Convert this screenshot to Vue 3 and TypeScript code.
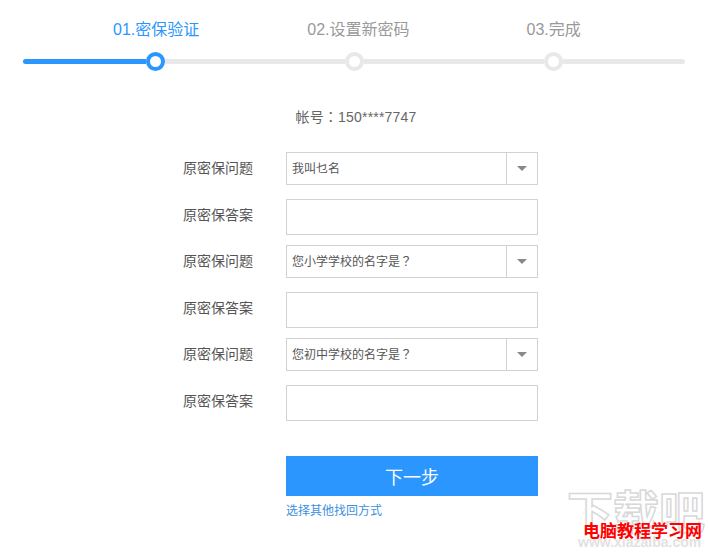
<script setup lang="ts">
interface Row {
  label: string
  value?: string
  mark?: string
}

const steps = [
  { text: '01.密保验证', active: true },
  { text: '02.设置新密码', active: false },
  { text: '03.完成', active: false },
]

const rows: Row[] = [
  { label: '原密保问题', value: '我叫乜名' },
  { label: '原密保答案' },
  { label: '原密保问题', value: '您小学学校的名字是', mark: '？' },
  { label: '原密保答案' },
  { label: '原密保问题', value: '您初中学校的名字是', mark: '？' },
  { label: '原密保答案' },
]
</script>

<template>
  <div class="page">
    <div class="labels">
      <span v-for="s in steps" :key="s.text" class="step-label" :class="{ active: s.active }">{{ s.text }}</span>
    </div>
    <div class="track">
      <i class="seg first on"></i>
      <i class="dot on"></i>
      <i class="seg"></i>
      <i class="dot"></i>
      <i class="seg"></i>
      <i class="dot"></i>
      <i class="seg last"></i>
    </div>

    <p class="account">帐号<span class="punct">：</span>150****7747</p>

    <form class="form" @submit.prevent>
      <div v-for="(row, i) in rows" :key="i" class="row" :class="row.value ? 'q' : 'a'">
        <label>{{ row.label }}</label>
        <div v-if="row.value" class="select">
          <span class="value">{{ row.value }}<span v-if="row.mark" class="punct">{{ row.mark }}</span></span>
          <span class="arrow"><i></i></span>
        </div>
        <input v-else type="text" />
      </div>
      <button type="submit">下一步</button>
      <a class="other" href="#">选择其他找回方式</a>
    </form>

    <div class="mark">
      <span class="mark-logo">下载吧</span>
      <span class="mark-url">www.xiazaiba.com</span>
      <span class="mark-red">电脑教程学习网</span>
    </div>
  </div>
</template>

<style>
html,
body {
  background: #fff;
}
</style>

<style scoped>
.page {
  position: relative;
  width: 709px;
  height: 553px;
  overflow: hidden;
  font-family: 'Liberation Sans', 'Noto Sans CJK SC', sans-serif;
  color: #555;
}
.punct {
  font-family: 'Noto Sans CJK TC', sans-serif;
}
.labels {
  display: flex;
  padding: 20px 0 0 113px;
  height: 41px;
  box-sizing: border-box;
}
.step-label {
  font-size: 16px;
  line-height: 20px;
  color: #999;
  white-space: nowrap;
}
.step-label + .step-label {
  margin-left: 108px;
}
.step-label:last-child {
  margin-left: 117px;
}
.step-label:first-child {
  color: #2c96ff;
}
.track {
  display: flex;
  align-items: center;
  height: 19px;
  margin: 11px 24px 0 23px;
}
.seg {
  width: 180px;
  height: 5px;
  background: #e8e8e8;
}
.seg.first {
  width: 123px;
  border-radius: 3px 0 0 3px;
}
.seg.last {
  flex: 1;
  border-radius: 0 3px 3px 0;
}
.seg.on {
  background: #2c96ff;
}
.dot {
  box-sizing: border-box;
  width: 19px;
  height: 19px;
  border: 4px solid #e8e8e8;
  border-radius: 50%;
  background: #fff;
}
.dot.on {
  border-color: #2c96ff;
}
.account {
  margin: 35px 0 0;
  padding-left: 3px;
  font-size: 14px;
  line-height: 20px;
  letter-spacing: 0.2px;
  text-align: center;
  color: #666;
}
.form {
  margin-top: 25px;
  padding-left: 183px;
  width: 355px;
}
.row {
  display: flex;
  align-items: center;
}
.row.q {
  height: 33px;
  margin-bottom: 14px;
}
.row.a {
  height: 36px;
  margin-bottom: 10px;
}
.row label {
  width: 103px;
  font-size: 14px;
  color: #555;
  position: relative;
}
.row.q label {
  top: -2px;
}
.row.a label {
  top: -3px;
}
.row input,
.select {
  box-sizing: border-box;
  width: 252px;
  height: 100%;
  margin: 0;
  padding: 0;
  border: 1px solid #d2d2d2;
  background: #fff;
  outline: none;
}
.select {
  display: flex;
  align-items: center;
}
.value {
  flex: 1;
  padding: 0 0 2px 5px;
  font-size: 12px;
  color: #555;
}
.arrow {
  display: flex;
  align-items: center;
  justify-content: center;
  width: 30px;
  height: 100%;
  border-left: 1px solid #d2d2d2;
}
.arrow i {
  width: 0;
  height: 0;
  border-style: solid;
  border-width: 5px 5px 0;
  border-color: #888 transparent transparent;
}
button {
  display: block;
  width: 252px;
  height: 40px;
  margin: 35px 0 0 103px;
  border: 0;
  background: #2c96ff;
  color: #fff;
  font-family: inherit;
  font-size: 18px;
}
.other {
  display: block;
  margin: 7px 0 0 103px;
  font-size: 12px;
  line-height: 17px;
  color: #3d8fe0;
  text-decoration: none;
}
.mark {
  position: absolute;
  left: 567px;
  top: 491px;
  width: 142px;
  height: 62px;
}
.mark-logo {
  position: absolute;
  left: 0;
  top: -3px;
  font-size: 46px;
  line-height: 50px;
  font-weight: 700;
  white-space: nowrap;
  color: #fff;
  -webkit-text-stroke: 1.5px #d8d8d8;
}
.mark-url {
  position: absolute;
  left: 11px;
  top: 44px;
  font-size: 14px;
  line-height: 14px;
  font-weight: 700;
  white-space: nowrap;
  color: #e2e2e2;
}
.mark-red {
  position: absolute;
  left: 16px;
  top: 31px;
  font-size: 17px;
  line-height: 20px;
  font-weight: 700;
  white-space: nowrap;
  color: #f00;
}
</style>
